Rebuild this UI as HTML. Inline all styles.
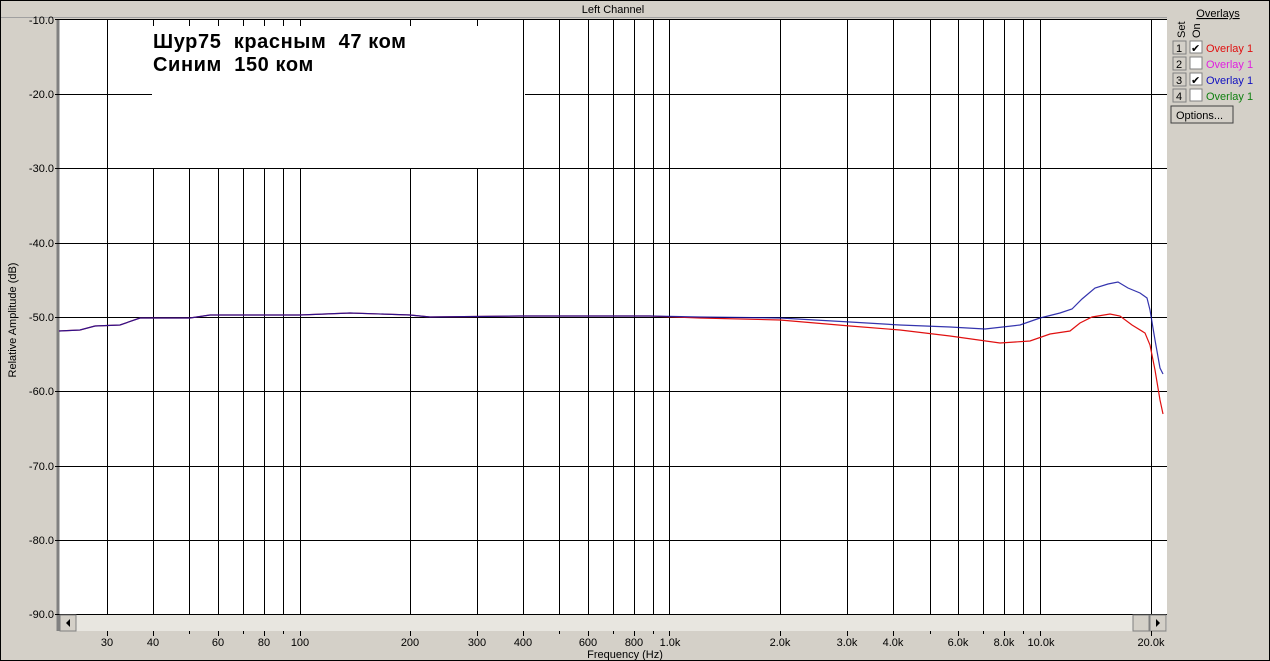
<!DOCTYPE html>
<html><head><meta charset="utf-8"><style>
html,body{margin:0;padding:0;background:#d4d0c8;}
body{width:1270px;height:661px;overflow:hidden;position:relative;font-family:"Liberation Sans",sans-serif;}
svg{position:absolute;left:0;top:0;}
text{font-family:"Liberation Sans",sans-serif;}
</style></head><body>
<svg width="1270" height="661" xmlns="http://www.w3.org/2000/svg">
<rect x="0" y="0" width="1270" height="661" fill="#d4d0c8"/>
<rect x="0.5" y="0.5" width="1269" height="660" fill="none" stroke="#000"/>
<rect x="1" y="1" width="1166" height="16" fill="#d4d0c8"/>
<line x1="1" y1="17.5" x2="1167" y2="17.5" stroke="#a0a0a0"/>
<text x="613" y="13" font-size="11" text-anchor="middle" fill="#000">Left Channel</text>
<rect x="59" y="19" width="1108" height="595" fill="#fff"/>
<line x1="58" y1="19" x2="58" y2="631" stroke="#808080" stroke-width="3"/>
<line x1="59" y1="19.5" x2="1167" y2="19.5" stroke="#000"/>
<g stroke="#000" stroke-width="1">
<line x1="55" y1="94.5" x2="152" y2="94.5"/><line x1="525" y1="94.5" x2="1167" y2="94.5"/>
<line x1="55" y1="168.5" x2="1167" y2="168.5"/>
<line x1="55" y1="243.5" x2="1167" y2="243.5"/>
<line x1="55" y1="317.5" x2="1167" y2="317.5"/>
<line x1="55" y1="391.5" x2="1167" y2="391.5"/>
<line x1="55" y1="466.5" x2="1167" y2="466.5"/>
<line x1="55" y1="540.5" x2="1167" y2="540.5"/>
<line x1="55" y1="614.5" x2="1167" y2="614.5"/>
<line x1="55" y1="19.5" x2="59" y2="19.5"/>
<line x1="107.5" y1="19" x2="107.5" y2="614"/>
<line x1="523.5" y1="19" x2="523.5" y2="614"/>
<g>
<line x1="153.5" y1="168" x2="153.5" y2="614"/><line x1="189.5" y1="168" x2="189.5" y2="614"/>
<line x1="218.5" y1="168" x2="218.5" y2="614"/><line x1="243.5" y1="168" x2="243.5" y2="614"/>
<line x1="264.5" y1="168" x2="264.5" y2="614"/><line x1="283.5" y1="168" x2="283.5" y2="614"/>
<line x1="300.5" y1="168" x2="300.5" y2="614"/><line x1="410.5" y1="168" x2="410.5" y2="614"/>
<line x1="477.5" y1="168" x2="477.5" y2="614"/>
<line x1="153.5" y1="20" x2="153.5" y2="26"/><line x1="189.5" y1="20" x2="189.5" y2="26"/>
<line x1="218.5" y1="20" x2="218.5" y2="26"/><line x1="243.5" y1="20" x2="243.5" y2="26"/>
<line x1="264.5" y1="20" x2="264.5" y2="26"/><line x1="283.5" y1="20" x2="283.5" y2="26"/>
<line x1="300.5" y1="20" x2="300.5" y2="26"/><line x1="410.5" y1="20" x2="410.5" y2="26"/>
<line x1="477.5" y1="20" x2="477.5" y2="26"/>
</g>
<line x1="559.5" y1="19" x2="559.5" y2="614"/><line x1="588.5" y1="19" x2="588.5" y2="614"/>
<line x1="613.5" y1="19" x2="613.5" y2="614"/><line x1="634.5" y1="19" x2="634.5" y2="614"/>
<line x1="653.5" y1="19" x2="653.5" y2="614"/><line x1="669.5" y1="19" x2="669.5" y2="614"/>
<line x1="780.5" y1="19" x2="780.5" y2="614"/><line x1="847.5" y1="19" x2="847.5" y2="614"/>
<line x1="893.5" y1="19" x2="893.5" y2="614"/><line x1="930.5" y1="19" x2="930.5" y2="614"/>
<line x1="958.5" y1="19" x2="958.5" y2="614"/><line x1="983.5" y1="19" x2="983.5" y2="614"/>
<line x1="1004.5" y1="19" x2="1004.5" y2="614"/><line x1="1023.5" y1="19" x2="1023.5" y2="614"/>
<line x1="1040.5" y1="19" x2="1040.5" y2="614"/><line x1="1151.5" y1="19" x2="1151.5" y2="614"/>
</g>
<g font-size="20" font-weight="bold" fill="#000" letter-spacing="0.6">
<text x="153" y="48">Шур75&#160; красным&#160; 47 ком</text>
<text x="153" y="71">Синим&#160; 150 ком</text>
</g>
<polyline fill="none" stroke="#e01010" stroke-width="1.2" points="59,331 80,330 95,326 120,325 140,318 190,318 210,315 300,315 350,313 410,315 430,317 520,316 650,316 700,318 780,320 850,326 900,330 950,336 1000,343 1030,341 1050,334 1070,331 1080,323 1092,317 1110,314 1120,316 1132,325 1145,333 1150,345 1155,370 1160,400 1163,414"/>
<polyline fill="none" stroke="#1010a0" stroke-width="1.2" stroke-opacity="0.85" points="59,331 80,330 95,326 120,325 140,318 190,318 210,315 300,315 350,313 410,315 430,317 520,316 650,316 700,317 780,318 850,322 900,325 950,327 985,329 1020,325 1040,318 1060,313 1072,309 1082,299 1095,288 1108,284 1118,282 1128,288 1140,293 1147,298 1150,310 1155,340 1160,368 1163,374"/>
<rect x="60" y="615" width="1107" height="16" fill="#e8e6e0"/>
<g>
<rect x="60" y="615" width="16" height="16" fill="#d4d0c8" stroke="#808080"/>
<polygon points="70,619 70,627 66,623" fill="#000"/>
<rect x="1133" y="615" width="16" height="16" fill="#d4d0c8" stroke="#808080"/>
<rect x="1150" y="615" width="16" height="16" fill="#d4d0c8" stroke="#808080"/>
<polygon points="1156,619 1156,627 1160,623" fill="#000"/>
</g>
<g font-size="11" fill="#000" text-anchor="end">
<text x="54" y="24">-10.0</text><text x="54" y="98">-20.0</text><text x="54" y="172">-30.0</text>
<text x="54" y="247">-40.0</text><text x="54" y="321">-50.0</text><text x="54" y="395">-60.0</text>
<text x="54" y="470">-70.0</text><text x="54" y="544">-80.0</text><text x="54" y="618">-90.0</text>
</g>
<text transform="translate(16,320) rotate(-90)" font-size="11" text-anchor="middle">Relative Amplitude (dB)</text>
<g stroke="#000">
<line x1="107.5" y1="631" x2="107.5" y2="636"/><line x1="153.5" y1="631" x2="153.5" y2="636"/>
<line x1="189.5" y1="631" x2="189.5" y2="634"/><line x1="218.5" y1="631" x2="218.5" y2="636"/>
<line x1="243.5" y1="631" x2="243.5" y2="634"/><line x1="264.5" y1="631" x2="264.5" y2="636"/>
<line x1="283.5" y1="631" x2="283.5" y2="634"/><line x1="300.5" y1="631" x2="300.5" y2="636"/>
<line x1="410.5" y1="631" x2="410.5" y2="636"/><line x1="477.5" y1="631" x2="477.5" y2="636"/>
<line x1="523.5" y1="631" x2="523.5" y2="636"/><line x1="559.5" y1="631" x2="559.5" y2="634"/>
<line x1="588.5" y1="631" x2="588.5" y2="636"/><line x1="613.5" y1="631" x2="613.5" y2="634"/>
<line x1="634.5" y1="631" x2="634.5" y2="636"/><line x1="653.5" y1="631" x2="653.5" y2="634"/>
<line x1="669.5" y1="631" x2="669.5" y2="636"/><line x1="780.5" y1="631" x2="780.5" y2="636"/>
<line x1="847.5" y1="631" x2="847.5" y2="636"/><line x1="893.5" y1="631" x2="893.5" y2="636"/>
<line x1="930.5" y1="631" x2="930.5" y2="634"/><line x1="958.5" y1="631" x2="958.5" y2="636"/>
<line x1="983.5" y1="631" x2="983.5" y2="634"/><line x1="1004.5" y1="631" x2="1004.5" y2="636"/>
<line x1="1023.5" y1="631" x2="1023.5" y2="634"/><line x1="1040.5" y1="631" x2="1040.5" y2="636"/>
<line x1="1151.5" y1="631" x2="1151.5" y2="636"/>
</g>
<g font-size="11" fill="#000" text-anchor="middle">
<text x="107" y="646">30</text><text x="153" y="646">40</text><text x="218" y="646">60</text>
<text x="264" y="646">80</text><text x="300" y="646">100</text><text x="410" y="646">200</text>
<text x="477" y="646">300</text><text x="523" y="646">400</text><text x="588" y="646">600</text>
<text x="634" y="646">800</text><text x="670" y="646">1.0k</text><text x="780" y="646">2.0k</text>
<text x="847" y="646">3.0k</text><text x="893" y="646">4.0k</text><text x="958" y="646">6.0k</text>
<text x="1004" y="646">8.0k</text><text x="1041" y="646">10.0k</text><text x="1151" y="646">20.0k</text>
<text x="625" y="658">Frequency (Hz)</text>
</g>
<text x="1218" y="17" font-size="11" text-anchor="middle" text-decoration="underline">Overlays</text>
<text transform="translate(1185,38) rotate(-90)" font-size="11">Set</text>
<text transform="translate(1200,38) rotate(-90)" font-size="11">On</text>
<g font-size="11">
<rect x="1173" y="41" width="13" height="13" fill="#d4d0c8" stroke="#808080"/><text x="1176" y="52">1</text>
<rect x="1190" y="41" width="12" height="12" fill="#fff" stroke="#808080"/><text x="1191" y="52" font-size="11">✔</text>
<text x="1206" y="52" fill="#e01010">Overlay 1</text>
<rect x="1173" y="57" width="13" height="13" fill="#d4d0c8" stroke="#808080"/><text x="1176" y="68">2</text>
<rect x="1190" y="57" width="12" height="12" fill="#fff" stroke="#808080"/>
<text x="1206" y="68" fill="#e020e0">Overlay 1</text>
<rect x="1173" y="73" width="13" height="13" fill="#d4d0c8" stroke="#808080"/><text x="1176" y="84">3</text>
<rect x="1190" y="73" width="12" height="12" fill="#fff" stroke="#808080"/><text x="1191" y="84" font-size="11">✔</text>
<text x="1206" y="84" fill="#1010c0">Overlay 1</text>
<rect x="1173" y="89" width="13" height="13" fill="#d4d0c8" stroke="#808080"/><text x="1176" y="100">4</text>
<rect x="1190" y="89" width="12" height="12" fill="#fff" stroke="#808080"/>
<text x="1206" y="100" fill="#108010">Overlay 1</text>
<rect x="1171" y="106" width="62" height="17" fill="#d4d0c8" stroke="#404040"/>
<text x="1176" y="119">Options...</text>
</g>
</svg>
</body></html>
